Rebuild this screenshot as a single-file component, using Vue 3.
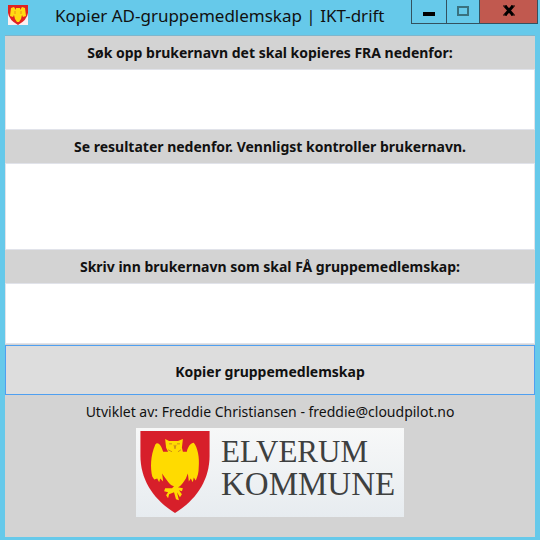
<script setup>
import { ref } from 'vue'

const source = ref('')
const results = ref('')
const target = ref('')
</script>

<template>
  <main class="window">
    <header class="titlebar">
      <svg class="app-icon" viewBox="0 0 20 20" aria-hidden="true">
        <rect width="20" height="20" fill="#fbeff0" />
        <path d="M0 0H20V8Q19 15 10 20Q1 15 0 8Z" fill="#e02222" />
        <path d="M3 3L6 2L8 5L8 3H12V5L14 2L17 3L18 11L15 12L14 10L13 14L11 17H9L7 14L6 10L5 12L2 11Z" fill="#ffdc12" />
        <path d="M7 6V9M13 6V9" stroke="#f08a18" fill="none" />
      </svg>
      <h1 class="title">Kopier AD-gruppemedlemskap | IKT-drift</h1>
      <div class="controls">
        <button class="control" type="button" aria-label="Minimer">
          <svg width="14" height="16" viewBox="0 0 14 16"><rect x="1" y="8" width="12" height="4" fill="#000" /></svg>
        </button>
        <button class="control" type="button" aria-label="Maksimer">
          <svg width="14" height="16" viewBox="0 0 14 16"><rect x="2" y="3" width="10" height="8" fill="none" stroke="#39717f" stroke-width="2" /></svg>
        </button>
        <button class="control close" type="button" aria-label="Lukk">
          <svg width="14" height="16" viewBox="0 0 14 16">
            <path d="M3 2L11 11M11 2L3 11" stroke="#000" stroke-width="3" />
            <path d="M1 2H5M9 2H13M1 11H5M9 11H13" stroke="#000" stroke-width="1" />
          </svg>
        </button>
      </div>
    </header>

    <form class="content" @submit.prevent>
      <label class="label" for="source">Søk opp brukernavn det skal kopieres FRA nedenfor:</label>
      <input id="source" v-model="source" class="field" type="text" />
      <label class="label" for="results">Se resultater nedenfor. Vennligst kontroller brukernavn.</label>
      <textarea id="results" v-model="results" class="field results"></textarea>
      <label class="label" for="target">Skriv inn brukernavn som skal FÅ gruppemedlemskap:</label>
      <input id="target" v-model="target" class="field" type="text" />
      <button class="submit" type="submit">Kopier gruppemedlemskap</button>
      <footer class="footer">
        <p class="credit">Utviklet av: Freddie Christiansen - freddie@cloudpilot.no</p>
        <div class="logo">
          <svg class="shield" viewBox="0 0 70 83" aria-hidden="true">
            <path d="M0 0H70V25C70 50 56 70 35 83C14 70 0 50 0 25Z" fill="#d71f2a" />
            <path
              d="M25 8L29 10H38L43 8L42 17L43 21L47 21C48 16 51 12 54 12C58 17 60 27 59 37C59 42 58 46 56 50L54 47L53 52L51 48L49 51L48 43L46 48L44 51C42 54 40 56 38 57L43 58L42 61L39 60L42 64L40 67L37 62L39 70L36 69L34 62L29 64L28 68L26 65L28 62L24 61L25 58L32 58L34 56C31 55 29 53 27 50L24 46L22 43L23 51L20 48L19 52L17 48L14 49L12 46C10 38 10 25 15 14C17 10 21 14 23 21L28 21L26 17Z"
              fill="#ffdb00"
            />
            <path d="M29 13H32M37 13H40M34 14L35 18L36 14M28 19L32 21M41 19L38 21" fill="none" stroke="#cc8b18" stroke-width="1" />
          </svg>
          <div class="wordmark">
            <span class="first">ELVERUM</span>
            <span class="second">KOMMUNE</span>
          </div>
        </div>
      </footer>
    </form>
  </main>
</template>

<style>
body {
  margin: 0;
  background: #66c9ea;
}
</style>

<style scoped>
.window {
  box-sizing: border-box;
  min-height: 100vh;
  display: flex;
  flex-direction: column;
  padding: 0 5px 3px;
  background: #66c9ea;
  color: #111;
  font-family: "Noto Sans", "Open Sans", sans-serif;
}

.titlebar {
  display: flex;
  align-items: flex-start;
  height: 35px;
}

.app-icon {
  width: 20px;
  height: 20px;
  margin: 5px 0 0 3px;
}

.title {
  flex: 1;
  margin: 4px 0 0 27px;
  font-size: 17px;
  line-height: 24px;
  font-weight: 400;
  white-space: nowrap;
}

.controls {
  display: flex;
  margin-right: -3px;
  border: 1px solid #33515f;
  border-top: 0;
}

.control {
  display: flex;
  align-items: center;
  justify-content: center;
  width: 35px;
  height: 23px;
  padding: 0;
  border: 0;
  border-right: 1px solid #33515f;
  background: #66c9ea;
}

.close {
  width: 57px;
  border-right: 0;
  background: #c1594f;
}

.control:nth-child(2) {
  width: 33px;
}

.content {
  flex: 1;
  display: flex;
  flex-direction: column;
  border-top: 1px solid #7fb6cc;
  background: #d3d3d3;
}

.label {
  padding-top: 1px;
  font-size: 14px;
  line-height: 32px;
  font-weight: 700;
  text-align: center;
}

.field {
  box-sizing: border-box;
  width: 100%;
  height: 61px;
  margin: 0;
  padding: 8px;
  border: 1px solid #e1e3ea;
  border-radius: 0;
  outline: 0;
  background: #fff;
  font: 14px "Noto Sans", "Open Sans", sans-serif;
  resize: none;
}

.results {
  height: 87px;
}

.submit {
  height: 50px;
  margin-top: 1px;
  padding: 2px 0 0;
  border: 1px solid #4f9ff0;
  background: #ddd;
  color: #111;
  font: 700 14px "Noto Sans", "Open Sans", sans-serif;
}

.footer {
  display: flex;
  flex-direction: column;
  align-items: center;
}

.credit {
  margin: 6px 0;
  font-size: 14px;
  line-height: 21px;
}

.logo {
  box-sizing: border-box;
  display: flex;
  align-items: flex-start;
  gap: 11px;
  width: 268px;
  height: 89px;
  padding: 3px 4px;
  background: linear-gradient(#f7f8f8, #e7ecf0);
}

.shield {
  flex: none;
  width: 70px;
  height: 82px;
}

.wordmark {
  display: flex;
  flex-direction: column;
  padding-top: 4px;
  color: #3e403f;
  font-family: "Liberation Serif", serif;
  line-height: 33px;
}

.first {
  font-size: 31px;
}

.second {
  font-size: 33px;
}
</style>
